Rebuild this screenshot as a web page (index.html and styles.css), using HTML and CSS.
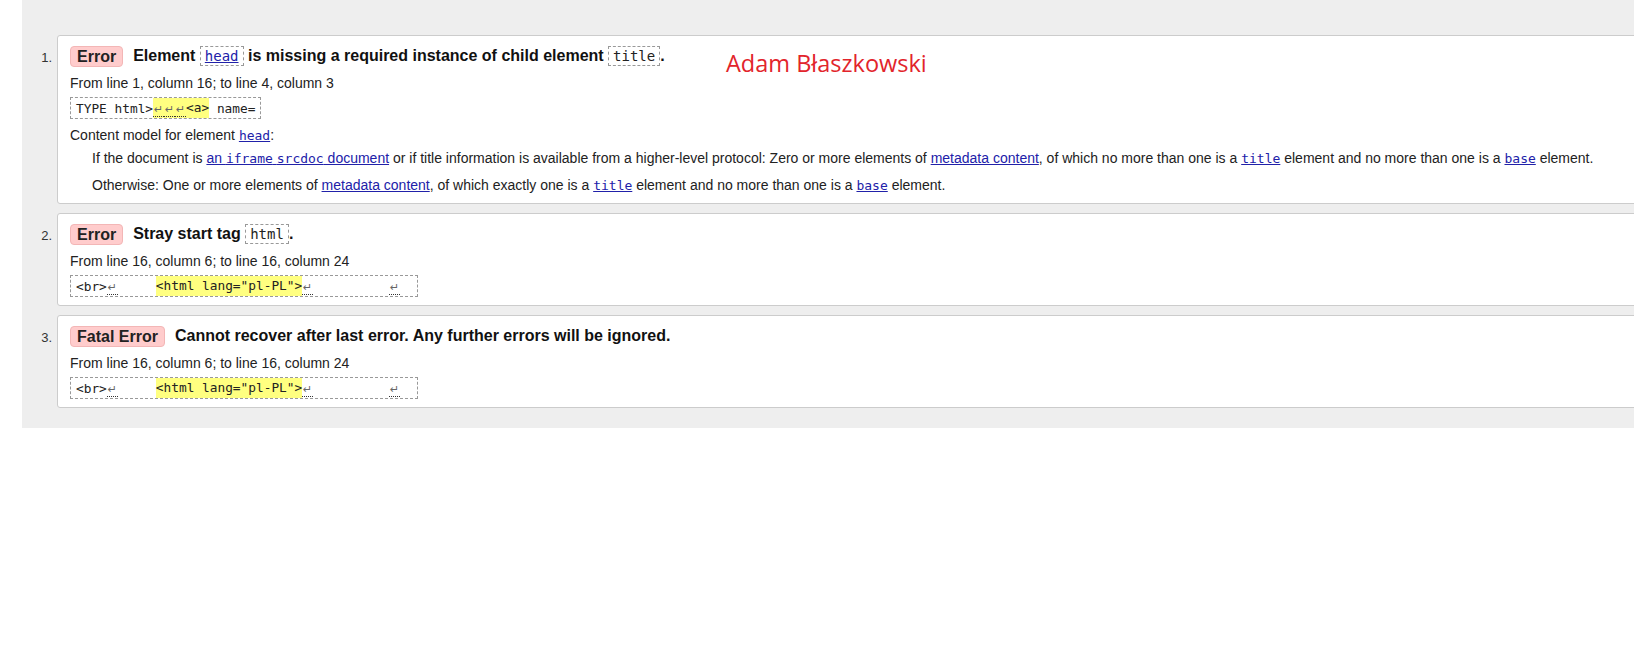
FILE: index.html
```html
<!DOCTYPE html>
<html lang="en">
<head>
<meta charset="utf-8">
<title>Validation results</title>
<link rel="stylesheet" href="styles.css">
</head>
<body>
<div class="page">
  <ol class="results">
    <li class="item">
      <span class="num">1.</span>
      <div class="card">
        <p class="msg"><span class="badge">Error</span><span class="msgtext">Element <a href="#" class="code link">head</a> is missing a required instance of child element <code class="code">title</code>.</span></p>
        <p class="loc">From line 1, column 16; to line 4, column 3</p>
        <div class="extract"><span>TYPE html&gt;</span><mark class="hl"><span class="lfs"><span class="lf">↵</span><span class="lf">↵</span><span class="lf">↵</span></span>&lt;a&gt;</mark><span> name=</span></div>
        <p class="cm">Content model for element <a href="#" class="mono">head</a>:</p>
        <div class="dd">
          <p class="ddp1">If the document is <a href="#">an <span class="mono">iframe</span> <span class="mono">srcdoc</span> document</a> or if title information is available from a higher-level protocol: Zero or more elements of <a href="#">metadata content</a>, of which no more than one is a <a href="#" class="mono">title</a> element and no more than one is a <a href="#" class="mono">base</a> element.</p>
          <p class="ddp2">Otherwise: One or more elements of <a href="#">metadata content</a>, of which exactly one is a <a href="#" class="mono">title</a> element and no more than one is a <a href="#" class="mono">base</a> element.</p>
        </div>
      </div>
    </li>
    <li class="item">
      <span class="num">2.</span>
      <div class="card">
        <p class="msg"><span class="badge">Error</span><span class="msgtext">Stray start tag <code class="code">html</code>.</span></p>
        <p class="loc">From line 16, column 6; to line 16, column 24</p>
        <div class="extract"><span>&lt;br&gt;</span><span class="lf">↵</span><span class="gap1"></span><mark class="hl">&lt;html lang="pl-PL"&gt;</mark><span class="lf">↵</span><span class="gap2"></span><span class="lf">↵</span><span class="gap3"></span></div>
      </div>
    </li>
    <li class="item">
      <span class="num">3.</span>
      <div class="card">
        <p class="msg"><span class="badge">Fatal Error</span><span class="msgtext">Cannot recover after last error. Any further errors will be ignored.</span></p>
        <p class="loc">From line 16, column 6; to line 16, column 24</p>
        <div class="extract"><span>&lt;br&gt;</span><span class="lf">↵</span><span class="gap1"></span><mark class="hl">&lt;html lang="pl-PL"&gt;</mark><span class="lf">↵</span><span class="gap2"></span><span class="lf">↵</span><span class="gap3"></span></div>
      </div>
    </li>
  </ol>
  <div class="signature">Adam Błaszkowski</div>
</div>
</body>
</html>
```

FILE: styles.css
```css
html, body {
  margin: 0;
  padding: 0;
  overflow: hidden;
  background: #fff;
}

body {
  font-family: "Liberation Sans", Arial, sans-serif;
  font-size: 14px;
  color: #222;
}

.page {
  position: relative;
  margin-left: 22px;
  margin-right: -60px;
  background: #eee;
  padding: 35px 0 20px 0;
}

.results {
  list-style: none;
  margin: 0;
  padding: 0;
  display: flex;
  flex-direction: column;
  gap: 9px;
}

.item {
  display: flex;
  align-items: baseline;
}

.num {
  width: 30px;
  flex: none;
  text-align: right;
  font-size: 13px;
  color: #333;
  padding-right: 5px;
}

.card {
  flex: 1;
  background: #fff;
  border: 1px solid #ccc;
  border-radius: 3px;
  padding: 8px 12px 8px 12px;
}

.card p {
  margin: 0;
}

.msg {
  line-height: 24px;
  font-size: 16px;
  font-weight: bold;
  color: #111;
  display: flex;
  align-items: center;
}

.badge {
  display: inline-block;
  line-height: 20px;
  padding: 0 6px;
  background: #fcc;
  border: 1px solid #f3b6b6;
  border-radius: 4px;
  box-sizing: border-box;
  height: 21px;
  margin-right: 10px;
  color: #222;
}

.msgtext {
  white-space: nowrap;
}

.code {
  font-family: "DejaVu Sans Mono", "Liberation Mono", monospace;
  font-weight: normal;
  font-size: 14px;
  border: 1px dashed #999;
  padding: 1px 4px;
  line-height: 20px;
  color: #222;
}

a {
  color: #2121a9;
  text-decoration: underline;
}

a.code {
  color: #2121a9;
}

.mono {
  font-family: "DejaVu Sans Mono", "Liberation Mono", monospace;
  font-size: 13px;
}

.loc {
  margin-top: 6px !important;
  line-height: 18px;
}

.extract {
  margin-top: 5px;
  display: inline-flex;
  align-items: center;
  white-space: pre;
  height: 22px;
  box-sizing: border-box;
  border: 1px dashed #999;
  padding: 0 5px;
  font-family: "DejaVu Sans Mono", "Liberation Mono", monospace;
  font-size: 12.8px;
  color: #222;
}

.hl {
  background: #ffff80;
  color: #222;
  display: inline-flex;
  align-items: center;
  height: 20px;
  line-height: 20px;
}

.lfs {
  display: inline-flex;
}

.lf {
  display: inline-block;
  width: 11px;
  text-align: center;
  font-family: "DejaVu Sans", sans-serif;
  font-size: 11px;
  line-height: 13px;
  color: #666;
  border-bottom: 1px dotted #333;
  margin-top: 3px;
}

.gap1 {
  display: inline-block;
  width: 38px;
}

.gap2 {
  display: inline-block;
  width: 76px;
}

.gap3 {
  display: inline-block;
  width: 12px;
}

.cm {
  margin-top: 7px !important;
  line-height: 18px;
}

.dd {
  margin-left: 22px;
}

.ddp1 {
  margin-top: 4px !important;
  line-height: 18px;
}

.ddp2 {
  margin-top: 8px !important;
  line-height: 18px;
}

.signature {
  position: absolute;
  left: 704px;
  top: 49px;
  font-family: "Open Sans", sans-serif;
  font-size: 23.5px;
  line-height: 28px;
  color: #e2242b;
}
```
